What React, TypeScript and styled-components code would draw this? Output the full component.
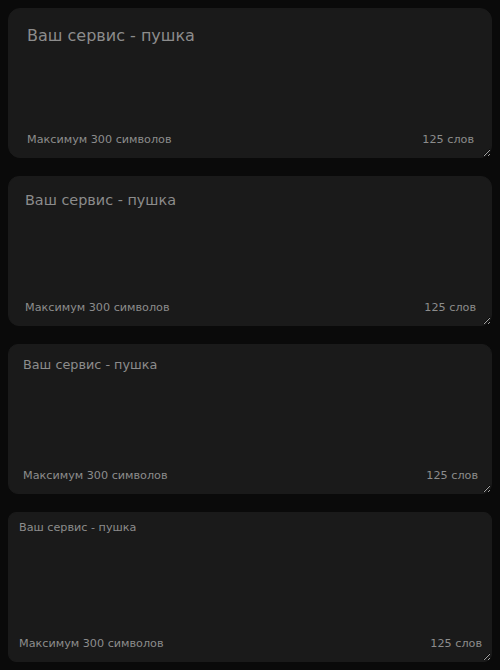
import React from "react";
import styled, {createGlobalStyle} from "styled-components";

const GlobalStyle = createGlobalStyle`
  body {
    margin: 8px;
    background: #0a0a0a;
    font-family: "DejaVu Sans", sans-serif;
  }
`;

type Variant = {
  fontSize: number;
  padding: number;
  top: number;
  radius: number;
};

// same field in four sizes
const variants: Variant[] = [
  {fontSize: 16, padding: 18, top: 17, radius: 12},
  {fontSize: 14.4, padding: 16, top: 15, radius: 11},
  {fontSize: 12.8, padding: 14, top: 12, radius: 10},
  {fontSize: 11.2, padding: 10, top: 8, radius: 8},
];

export default function App() {
  return (
    <>
      <GlobalStyle/>
      <Stack>
        {variants.map((v, i) => (
          <Field key={i}>
            <Area
              $fontSize={v.fontSize}
              $padding={v.padding}
              $top={v.top}
              $radius={v.radius}
              defaultValue="Ваш сервис - пушка"
            />
            <Hint $side="left" $inset={v.padding + 1}>Максимум 300 символов</Hint>
            <Hint $side="right" $inset={v.padding}>125 слов</Hint>
          </Field>
        ))}
      </Stack>
    </>
  );
}

const Stack = styled.div`
  display: flex;
  flex-direction: column;
  gap: 18px;
`;

const Field = styled.div`
  position: relative;
`;

const Area = styled.textarea<{$fontSize: number; $padding: number; $top: number; $radius: number}>`
  display: block;
  width: 100%;
  height: 150px;
  box-sizing: border-box;
  margin: 0;
  padding: ${p => p.$top}px ${p => p.$padding}px ${p => p.$padding}px;
  border: 1px solid #1a1a1a;
  outline: none;
  border-radius: ${p => p.$radius}px;
  background: #1a1a1a;
  color: #8c8c8c;
  font-family: "DejaVu Sans", sans-serif;
  font-size: ${p => p.$fontSize}px;
  resize: vertical;
`;

const Hint = styled.span<{$side: "left" | "right"; $inset: number}>`
  position: absolute;
  bottom: 12px;
  ${p => p.$side}: ${p => p.$inset}px;
  font-size: 11.2px;
  color: #8c8c8c;
  pointer-events: none;
`;
